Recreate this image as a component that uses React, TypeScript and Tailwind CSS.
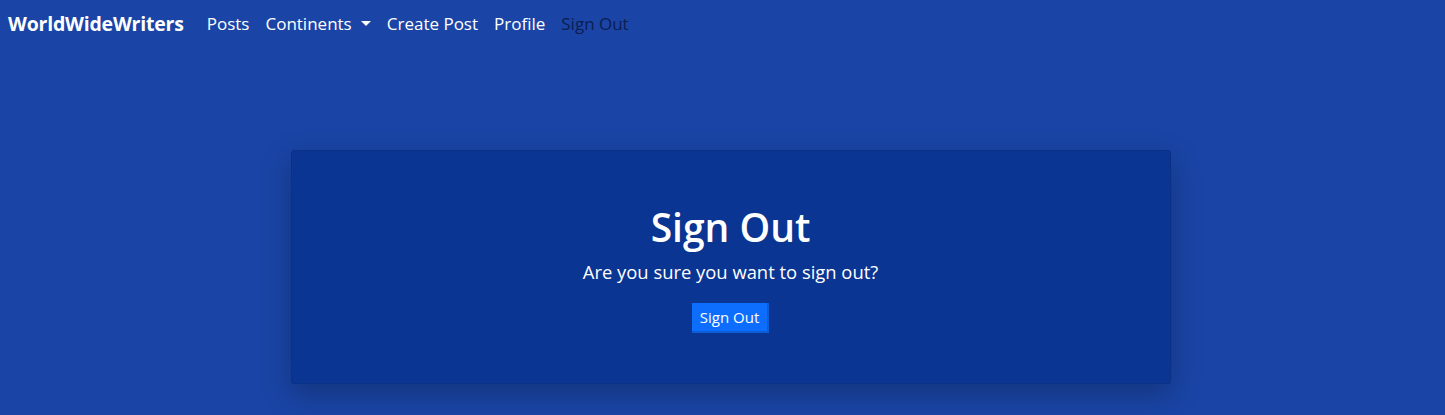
import React from 'react';

const navLinks = ['Posts', 'Continents', 'Create Post', 'Profile'];

const App: React.FC = () => {
  return (
    <div className="min-h-screen bg-[#1a45a6] font-['Open_Sans','Noto_Sans',sans-serif] text-white">
      {/* Navbar */}
      <nav className="flex items-center h-[48px] px-[8px]">
        <span className="text-[19.5px] font-bold mr-[23px] tracking-[-0.2px]">WorldWideWriters</span>
        <div className="flex items-center gap-[16px] text-[17px]">
          {navLinks.map((l) =>
            l === 'Continents' ? (
              <span key={l} className="flex items-center">
                {l}
                <svg className="ml-[9px]" width="10" height="6" viewBox="0 0 10 6">
                  <path d="M0 0h10L5 5z" fill="white" />
                </svg>
              </span>
            ) : (
              <span key={l}>{l}</span>
            )
          )}
          <span className="text-[#0c1d52]">Sign Out</span>
        </div>
      </nav>

      {/* Card */}
      <div className="flex justify-center pt-[102px] pl-[16px]">
        <div className="w-[880px] h-[234px] bg-[#0a3592] border border-[#0a3187] rounded-[3px] shadow-[0_10px_30px_rgba(0,0,0,0.25)] flex flex-col items-center pt-[52px]">
          <h1 className="text-[39px] font-semibold leading-[48px]">Sign Out</h1>
          <p className="text-[18.4px] mt-[8px] leading-[26px]">Are you sure you want to sign out?</p>
          <button className="mt-[18px] bg-[#0d6efd] border-r-2 border-b-2 border-[#0b5ed7] text-[15px] px-[8px] h-[30px]">
            Sign Out
          </button>
        </div>
      </div>
    </div>
  );
};

export default App;
